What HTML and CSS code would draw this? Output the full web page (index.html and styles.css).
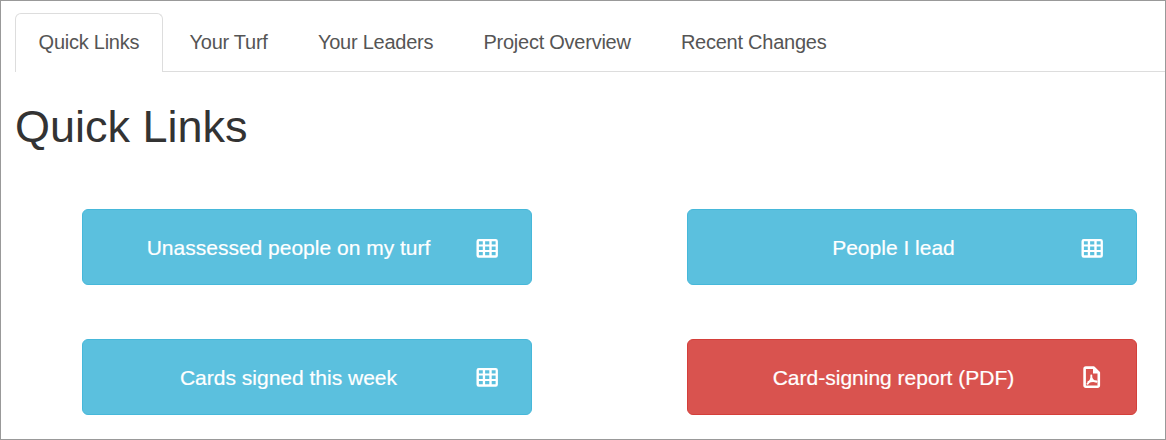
FILE: index.html
```html
<!DOCTYPE html>
<html lang="en">
<head>
<meta charset="utf-8">
<title>Quick Links</title>
<link rel="stylesheet" href="styles.css">
</head>
<body>
<svg class="defs" aria-hidden="true">
  <symbol id="table" viewBox="0 0 24 24">
    <path fill="currentColor" fill-rule="evenodd" d="M3.700 3h17a2.200 2.200 0 0 1 2.200 2.200v14.400a2.200 2.200 0 0 1-2.200 2.200h-17a2.200 2.200 0 0 1-2.200-2.200v-14.400a2.200 2.200 0 0 1 2.200-2.200zM3.900 5.200v3.300h3.900v-3.300zM10.100 5.200v3.300h4.200v-3.300zM16.700 5.200v3.300h3.900v-3.300zM3.900 10.600v3.300h3.900v-3.300zM10.100 10.600v3.300h4.200v-3.300zM16.700 10.600v3.300h3.900v-3.300zM3.900 15.900v3.300h3.900v-3.300zM10.100 15.900v3.300h4.200v-3.300zM16.700 15.900v3.300h3.900v-3.300z"/>
  </symbol>
  <symbol id="pdf" viewBox="0 0 24 24">
    <path fill="none" stroke="currentColor" stroke-width="2.600" stroke-linejoin="round" d="M5.800 2.600h8l5 5v13a1.200 1.200 0 0 1-1.200 1.200h-11.800a1.200 1.200 0 0 1-1.200-1.200v-16.800a1.200 1.200 0 0 1 1.200-1.200z"/>
    <path fill="currentColor" d="M13 2v6.400h6.500z"/>
    <path fill="none" stroke="currentColor" stroke-width="1.900" stroke-linecap="round" d="M11.300 10.500c.6 3.500-1.300 6-3.800 8.300M11.500 12.700c.6 2.200 2.200 3.600 5.100 4M8.400 17c2.400-1 5.500-1.300 8.200-.5"/>
  </symbol>
</svg>
<main class="page">
  <nav class="tabs">
    <a class="tab active">Quick Links</a>
    <a class="tab">Your Turf</a>
    <a class="tab">Your Leaders</a>
    <a class="tab">Project Overview</a>
    <a class="tab">Recent Changes</a>
  </nav>
  <h1 class="title">Quick Links</h1>
  <div class="links">
    <a class="link"><span class="label">Unassessed people on my turf</span><svg class="icon"><use href="#table"/></svg></a>
    <a class="link"><span class="label">People I lead</span><svg class="icon"><use href="#table"/></svg></a>
    <a class="link"><span class="label">Cards signed this week</span><svg class="icon"><use href="#table"/></svg></a>
    <a class="link danger"><span class="label">Card-signing report (PDF)</span><svg class="icon"><use href="#pdf"/></svg></a>
  </div>
</main>
</body>
</html>
```
FILE: styles.css
```css
* { box-sizing: border-box; }
body { margin: 0; font-family: "Liberation Sans", Arial, sans-serif; color: #333; }
.defs { display: none; }
.page { height: 440px; border: 1px solid #999; padding: 12px 0 0 14px; overflow: hidden; background: #fff; }
.tabs { display: flex; gap: 3.100px; height: 59px; border-bottom: 1px solid #ddd; }
.tab { height: 59px; padding: 0 22.600px; border: 1px solid transparent; border-bottom: 0; border-radius: 6px 6px 0 0; font-size: 20px; line-height: 57px; letter-spacing: -0.250px; color: #555; white-space: nowrap; }
.tab.active { background: #fff; border-color: #ddd; }
.title { margin: 30px 0 0; font-size: 45px; line-height: 50px; font-weight: 400; }
.links { display: grid; grid-template-columns: 450px 450px; column-gap: 155px; row-gap: 54px; padding: 57px 0 0 67px; }
.link { display: flex; align-items: center; height: 76px; padding: 0 31px 0 31px; border: 1px solid #46b8da; border-radius: 6px; background: #5bc0de; color: #fff; font-size: 21px; -webkit-text-stroke: 0.200px currentColor; }
.label { flex: 1; padding: 2px 12px 0 0; text-align: center; }
.icon { width: 24px; height: 24px; margin-right: 1px; }
.link:nth-child(-n+2) .icon { margin-top: 2px; }
.danger { background: #d9534f; border-color: #d43f3a; }
```
